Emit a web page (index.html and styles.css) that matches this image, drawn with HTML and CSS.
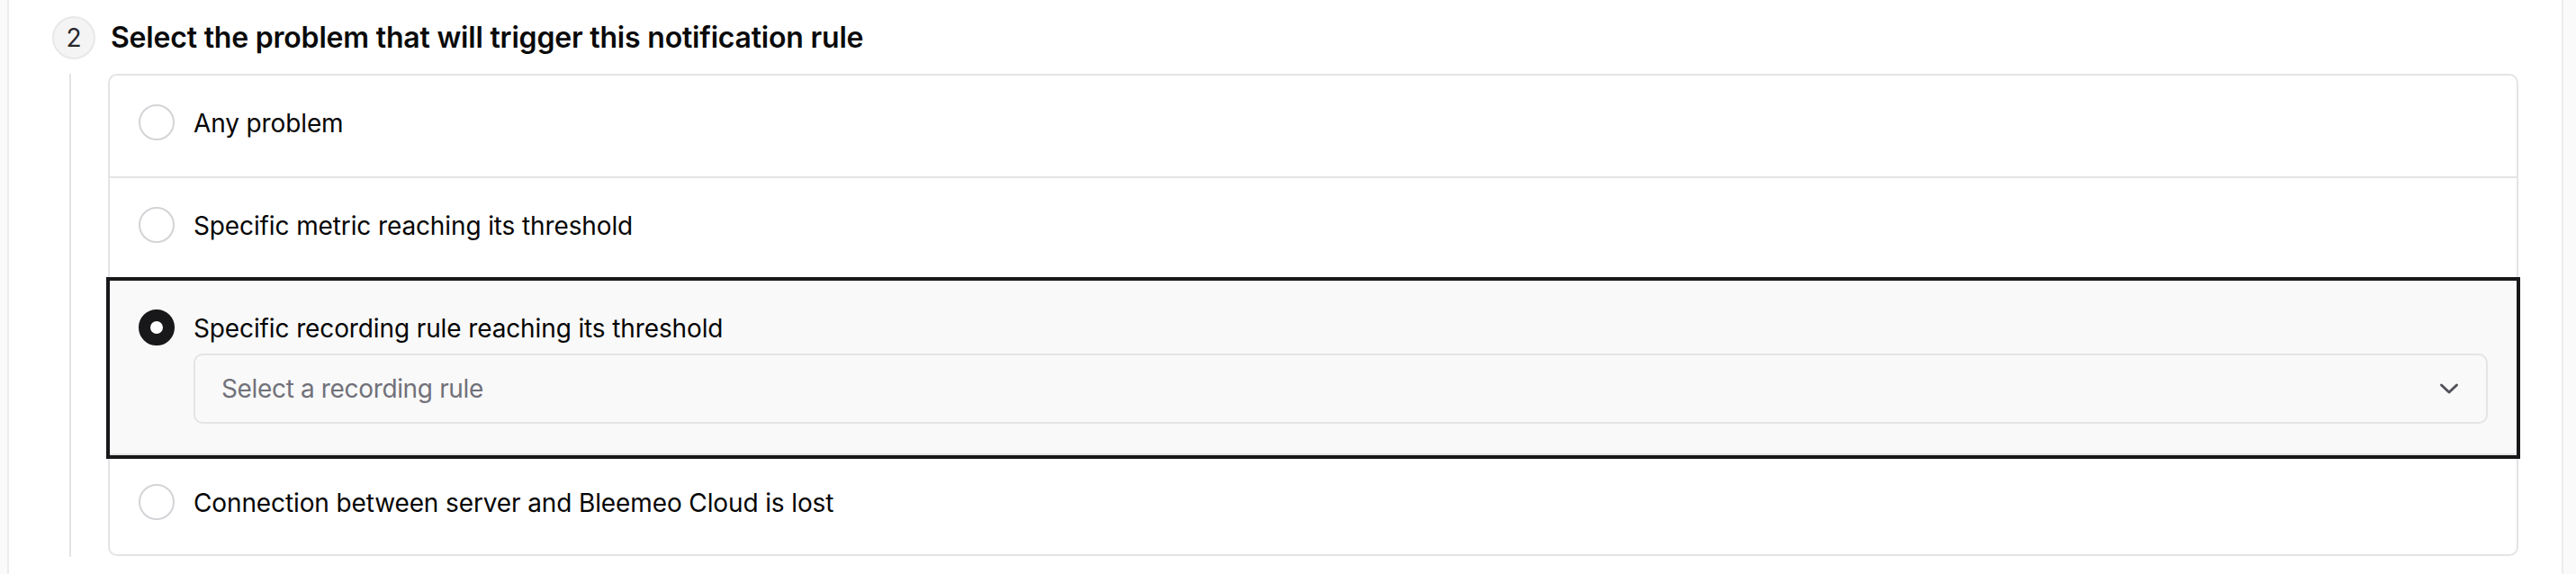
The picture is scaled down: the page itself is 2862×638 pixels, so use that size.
FILE: index.html
```html
<!DOCTYPE html>
<html lang="en">
<head>
<meta charset="utf-8">
<title>Notification rule</title>
<link rel="stylesheet" href="styles.css">
</head>
<body>
<div class="panel">
  <div class="step-head">
    <span class="step-num">2</span>
    <h2 class="step-title">Select the problem that will trigger this notification rule</h2>
  </div>
  <div class="step-body">
    <div class="card">
      <div class="option">
        <span class="radio"></span>
        <div class="option-main"><span class="label">Any problem</span></div>
      </div>
      <div class="option">
        <span class="radio"></span>
        <div class="option-main"><span class="label">Specific metric reaching its threshold</span></div>
      </div>
      <div class="option selected">
        <span class="radio checked"></span>
        <div class="option-main">
          <span class="label">Specific recording rule reaching its threshold</span>
          <div class="select">
            <span class="placeholder">Select a recording rule</span>
            <svg class="chevron" width="22" height="14" viewBox="0 0 22 14" aria-hidden="true"><path d="M2.5 3 L11 11 L19.5 3" fill="none" stroke="#52525b" stroke-width="3" stroke-linecap="round" stroke-linejoin="round"/></svg>
          </div>
        </div>
      </div>
      <div class="option last">
        <span class="radio"></span>
        <div class="option-main"><span class="label">Connection between server and Bleemeo Cloud is lost</span></div>
      </div>
    </div>
  </div>
</div>
</body>
</html>
```

FILE: styles.css
```css
* { box-sizing: border-box; }
html, body { margin: 0; padding: 0; }
body {
  background: #fafafa;
  font-family: Inter, "Noto Sans", "Liberation Sans", sans-serif;
  color: #18181b;
}
.panel {
  margin-left: 8px;
  width: 2840px;
  min-height: 638px;
  background: #ffffff;
  border-left: 2px solid #ececec;
  border-right: 2px solid #ececec;
  padding: 18px 48px 0 48px;
}
.step-head {
  display: flex;
  align-items: center;
  gap: 17px;
}
.step-num {
  width: 48px;
  height: 48px;
  border-radius: 50%;
  background: #f4f4f5;
  border: 2px solid #e8e8ea;
  display: flex;
  align-items: center;
  justify-content: center;
  font-size: 28px;
  color: #27272a;
  flex: none;
}
.step-title {
  margin: 0;
  font-size: 32px;
  font-weight: 600;
  letter-spacing: -0.2px;
  line-height: 40px;
  color: #0a0a0a;
}
.step-body {
  margin-top: 16px;
  margin-left: 19px;
  border-left: 2px solid #e4e4e7;
  padding-left: 41px;
  padding-bottom: 1px;
}
.card {
  border: 2px solid #e4e4e7;
  border-radius: 10px;
  background: #ffffff;
}
.option {
  display: flex;
  align-items: flex-start;
  gap: 21px;
  padding: 32px 32px 38px 32px;
  border-bottom: 2px solid #e4e4e7;
  position: relative;
}
.option.last {
  border-bottom: none;
  padding-bottom: 36px;
}
.option.selected {
  background: #f9f9f9;
  outline: 4px solid #18181b;
  z-index: 1;
  padding-bottom: 33px;
}
.radio {
  width: 40px;
  height: 40px;
  flex: none;
  border-radius: 50%;
  border: 2px solid #d4d4d8;
  background: #ffffff;
}
.radio.checked {
  border: 13px solid #18181b;
  background: #ffffff;
}
.option-main {
  flex: 1;
  display: flex;
  flex-direction: column;
  gap: 7px;
}
.label {
  font-size: 28px;
  line-height: 42px;
  letter-spacing: -0.12px;
  color: #050505;
}
.select {
  height: 78px;
  border: 2px solid #e4e4e7;
  border-radius: 10px;
  background: #f9f9f9;
  display: flex;
  align-items: center;
  justify-content: space-between;
  padding: 0 30px 0 29px;
}
.placeholder {
  font-size: 28px;
  letter-spacing: -0.35px;
  color: #71717a;
}
.chevron { display: block; }
```
